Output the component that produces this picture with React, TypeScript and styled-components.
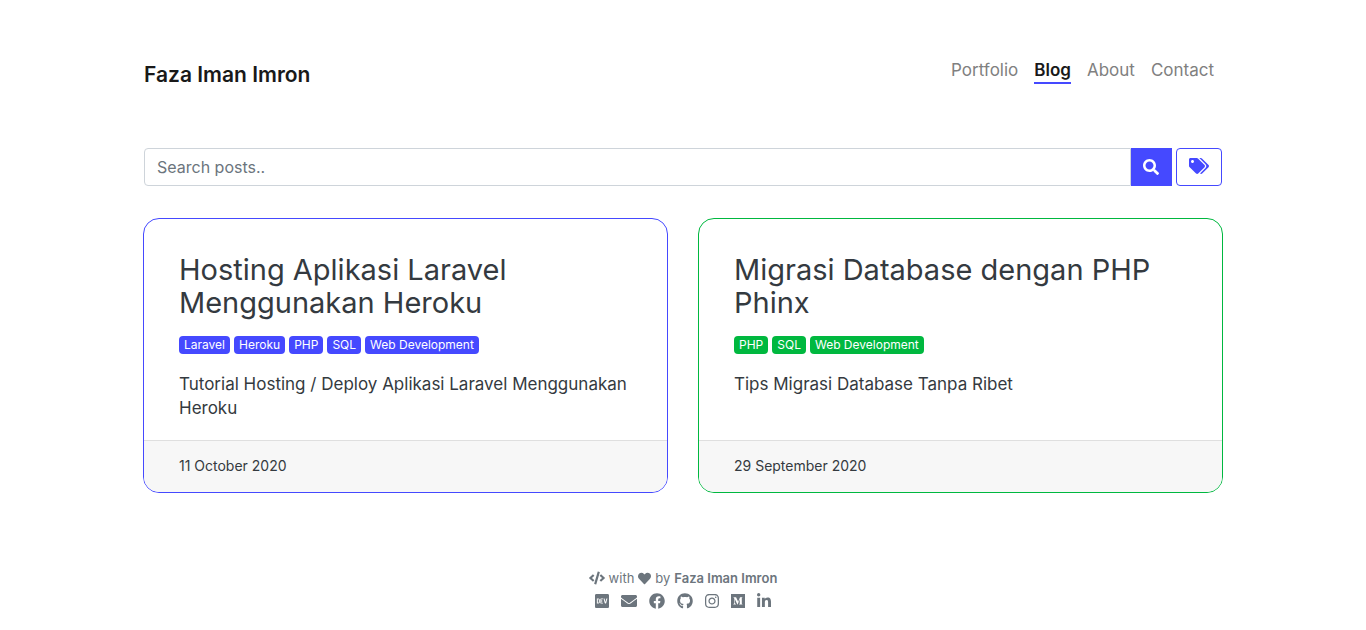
import React from "react";
import styled, { createGlobalStyle } from "styled-components";
import {
  FaCode, FaDev, FaEnvelope, FaFacebook, FaGithub, FaHeart,
  FaInstagram, FaLinkedinIn, FaMedium, FaSearch, FaTags,
} from "react-icons/fa";

const GlobalStyle = createGlobalStyle`
  *, *::before, *::after { box-sizing: border-box; }
  body {
    margin: 0;
    background: #fff;
    color: #212529;
    font: 400 16px/24px Inter, "Open Sans", sans-serif;
  }
  a { color: inherit; text-decoration: none; }
  h2, p { margin: 0; }
`;

const Page = styled.div`
  max-width: 1110px;
  margin: 0 auto;
  padding: 56px 15px 0;
`;

const Header = styled.header`
  display: flex;
  justify-content: space-between;
  align-items: flex-start;
  padding: 0 1px;
  height: 92px;
`;

const Brand = styled.a`
  color: #191919;
  font-size: 21px;
  line-height: 38px;
  font-weight: 600;
`;

const Nav = styled.nav`
  display: flex;
  gap: 16px;
  padding-right: 8px;
`;

const NavLink = styled.a<{ $active?: boolean }>`
  height: 28px;
  font-size: 17px;
  line-height: 28px;
  border-bottom: 2px solid ${(p) => (p.$active ? "#4549ff" : "transparent")};
  color: ${(p) => (p.$active ? "#191919" : "#808080")};
  font-weight: ${(p) => (p.$active ? 600 : 400)};
`;

const SearchForm = styled.form`
  display: flex;
  height: 38px;
  padding: 0 1px;
`;

const SearchInput = styled.input`
  flex: 1;
  min-width: 0;
  padding: 0 12px;
  border: 1px solid #ced4da;
  border-radius: 4px 0 0 4px;
  background: #fff;
  color: #495057;
  font: inherit;
  &::placeholder { color: #6c757d; opacity: 1; }
`;

const SearchButton = styled.button`
  display: flex;
  align-items: center;
  justify-content: center;
  width: 41px;
  padding: 0 1px 0 0;
  border: 0;
  background: #4549ff;
  color: #fff;
  font-size: 16px;
`;

const TagsButton = styled(SearchButton)`
  width: 46px;
  margin-left: 4px;
  padding: 0 0 2px;
  border: 1px solid #4549ff;
  border-radius: 4px;
  background: #fff;
  color: #4549ff;
  svg { width: 20px; height: 16px; }
`;

const Posts = styled.main`
  display: grid;
  grid-template-columns: repeat(auto-fit, minmax(320px, 1fr));
  gap: 30px;
  padding-top: 32px;
`;

const Card = styled.article<{ $color: string }>`
  --accent: ${(p) => p.$color};
  display: flex;
  flex-direction: column;
  overflow: hidden;
  border: 1px solid var(--accent);
  border-radius: 16px;
`;

const CardBody = styled.div`
  flex: 1;
  padding: 34px 35px 20px;
  color: #343a40;
`;

const Title = styled.h2`
  font-size: 29px;
  line-height: 33px;
  font-weight: 400;
`;

const Badges = styled.div`
  display: flex;
  flex-wrap: wrap;
  gap: 4px;
  padding: 17px 0 18px;
`;

const Badge = styled.a`
  padding: 0 5px;
  border-radius: 4px;
  background: var(--accent);
  color: #fff;
  font-size: 12px;
  line-height: 18px;
`;

const Summary = styled.p`
  font-size: 17px;
`;

const CardFooter = styled.footer`
  padding: 13px 35px 14px;
  border-top: 1px solid #dfdfdf;
  background: #f7f7f7;
  color: #343a40;
  font-size: 14px;
`;

const Footer = styled.footer`
  padding-top: 74px;
  color: #6c757d;
  text-align: center;
  font-size: 13px;
`;

const Credit = styled.p`
  display: flex;
  align-items: center;
  justify-content: center;
  gap: 4px;
  line-height: 22px;
  a { font-weight: 600; }
`;

const Social = styled.div`
  display: flex;
  justify-content: center;
  gap: 12px;
  padding-top: 4px;
`;

const SocialLink = styled.a<{ $wide?: boolean }>`
  display: flex;
  svg {
    width: ${(p) => (p.$wide ? 16 : 14)}px;
    height: 16px;
  }
`;

const posts = [
  {
    title: "Hosting Aplikasi Laravel Menggunakan Heroku",
    tags: ["Laravel", "Heroku", "PHP", "SQL", "Web Development"],
    text: "Tutorial Hosting / Deploy Aplikasi Laravel Menggunakan Heroku",
    date: "11 October 2020",
    color: "#4549ff",
  },
  {
    title: "Migrasi Database dengan PHP Phinx",
    tags: ["PHP", "SQL", "Web Development"],
    text: "Tips Migrasi Database Tanpa Ribet",
    date: "29 September 2020",
    color: "#00b83f",
  },
];

const socials = [
  { name: "Dev", Icon: FaDev },
  { name: "Email", Icon: FaEnvelope, wide: true },
  { name: "Facebook", Icon: FaFacebook, wide: true },
  { name: "GitHub", Icon: FaGithub, wide: true },
  { name: "Instagram", Icon: FaInstagram },
  { name: "Medium", Icon: FaMedium },
  { name: "LinkedIn", Icon: FaLinkedinIn },
];

export default function App() {
  return (
    <>
      <GlobalStyle />
      <Page>
        <Header>
          <Brand href="#">Faza Iman Imron</Brand>
          <Nav>
            {["Portfolio", "Blog", "About", "Contact"].map((item) => (
              <NavLink key={item} href="#" $active={item === "Blog"}>{item}</NavLink>
            ))}
          </Nav>
        </Header>
        <SearchForm>
          <SearchInput type="text" placeholder="Search posts.." aria-label="Search posts" />
          <SearchButton type="submit" aria-label="Search"><FaSearch /></SearchButton>
          <TagsButton type="button" aria-label="Tags"><FaTags /></TagsButton>
        </SearchForm>
        <Posts>
          {posts.map((post) => (
            <Card key={post.title} $color={post.color}>
              <CardBody>
                <Title>{post.title}</Title>
                <Badges>
                  {post.tags.map((tag) => <Badge key={tag} href="#">{tag}</Badge>)}
                </Badges>
                <Summary>{post.text}</Summary>
              </CardBody>
              <CardFooter>{post.date}</CardFooter>
            </Card>
          ))}
        </Posts>
        <Footer>
          <Credit>
            <FaCode size={16} /> with <FaHeart size={13} /> by <a href="#">Faza Iman Imron</a>
          </Credit>
          <Social>
            {socials.map(({ name, Icon, wide }) => (
              <SocialLink key={name} href="#" aria-label={name} $wide={wide}><Icon /></SocialLink>
            ))}
          </Social>
        </Footer>
      </Page>
    </>
  );
}
